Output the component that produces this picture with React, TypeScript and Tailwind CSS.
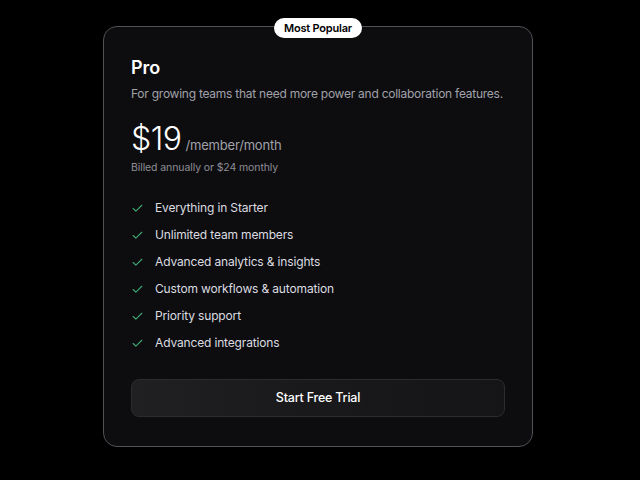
import { Check } from "lucide-react";

const features = [
  "Everything in Starter",
  "Unlimited team members",
  "Advanced analytics & insights",
  "Custom workflows & automation",
  "Priority support",
  "Advanced integrations",
];

const App = () => {
  return (
    <div
      className="min-h-screen w-full bg-black pt-[26px] pl-[103px]"
      style={{ fontFamily: "Inter, 'Noto Sans', sans-serif" }}
    >
      {/* Card */}
      <div className="relative w-[430px] h-[421px] rounded-[14px] border-[1.5px] border-[#515156] bg-[#0d0d0f] px-[27px] pt-[30px]">
        {/* Badge */}
        <div className="absolute left-1/2 top-[-9px] -translate-x-1/2 rounded-full bg-white px-[10px] h-[20px] flex items-center text-[11px] font-semibold tracking-[-0.2px] text-black whitespace-nowrap">
          Most Popular
        </div>

        <h2 className="text-[18px] leading-[22px] font-semibold text-white">Pro</h2>
        <p className="mt-[6px] text-[12px] tracking-[-0.25px] leading-[18px] text-[#a1a1aa] whitespace-nowrap">
          For growing teams that need more power and collaboration features.
        </p>

        {/* Price */}
        <div className="mt-[16px] flex items-baseline gap-[4px]">
          <span className="text-[32px] tracking-[-0.5px] leading-[40px] font-light text-white">$19</span>
          <span className="text-[13px] tracking-[-0.2px] text-[#a1a1aa]">/member/month</span>
        </div>
        <p className="mt-[2px] text-[10.5px] tracking-[-0.1px] leading-[14px] text-[#8e8e96]">Billed annually or $24 monthly</p>

        {/* Features */}
        <ul className="mt-[24px] flex flex-col gap-[9px]">
          {features.map((f) => (
            <li key={f} className="flex items-center gap-[11px] h-[18px]">
              <Check className="h-[13px] w-[13px] text-[#3fa774]" strokeWidth={2} />
              <span className="text-[12px] tracking-[-0.15px] text-[#dcdce0]">{f}</span>
            </li>
          ))}
        </ul>

        {/* Button */}
        <button className="mt-[27px] w-full h-[38px] rounded-[8px] border border-[#2c2c30] bg-gradient-to-r from-[#202022] via-[#19191b] to-[#151517] text-[12.5px] font-medium tracking-[-0.2px] text-white">
          Start Free Trial
        </button>
      </div>
    </div>
  );
};

export default App;
